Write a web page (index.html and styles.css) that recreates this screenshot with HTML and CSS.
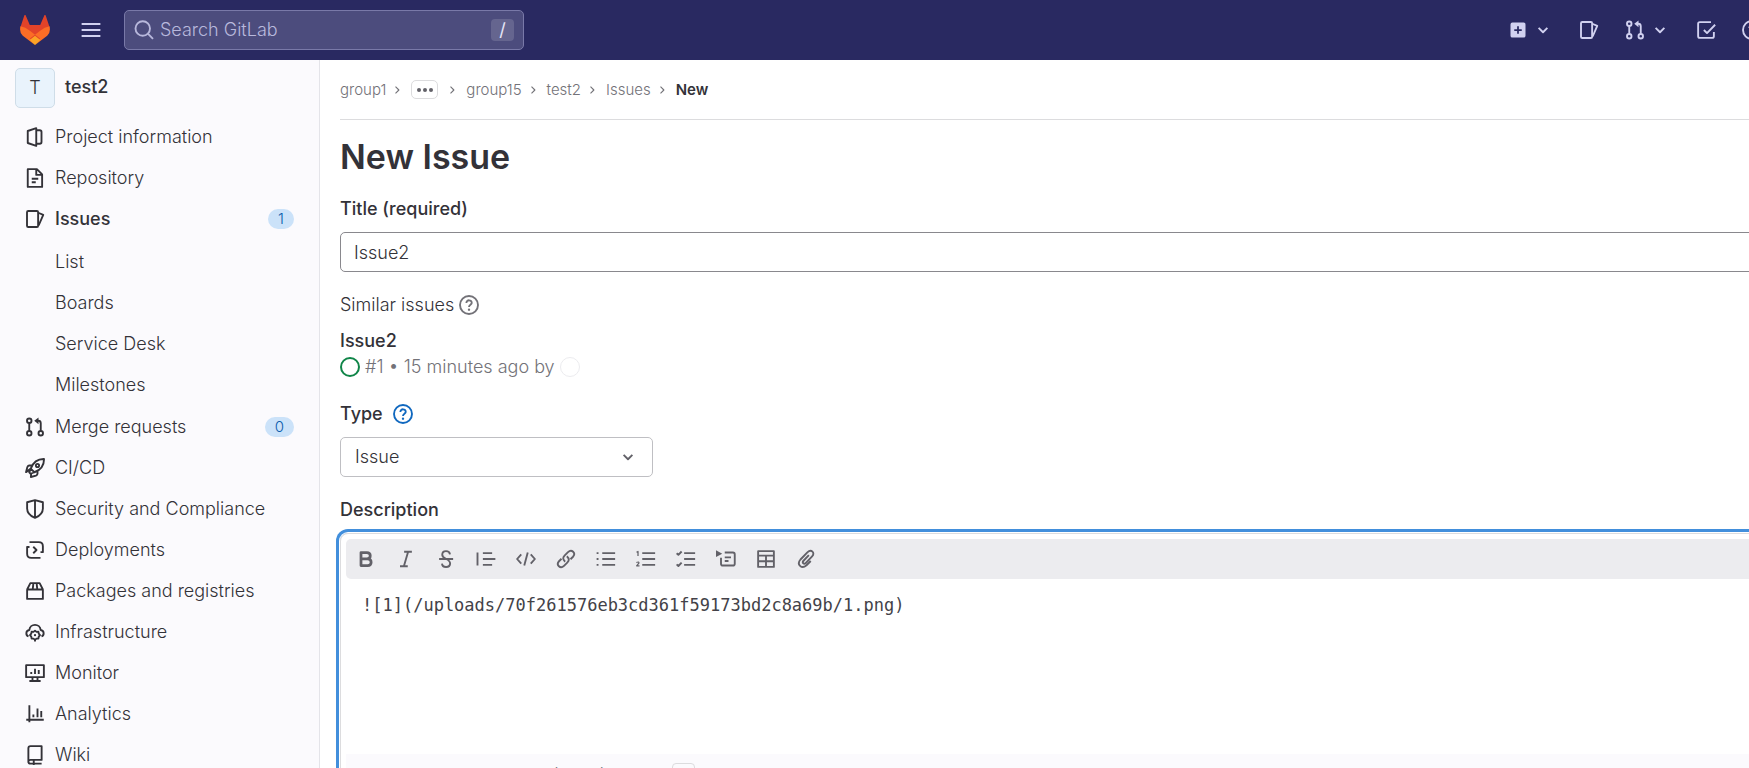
FILE: index.html
```
<!DOCTYPE html>
<html lang="en">
<head>
<meta charset="utf-8">
<title>New Issue · test2 · GitLab</title>
<link rel="stylesheet" href="styles.css">
</head>
<body>
<svg class="sprite" aria-hidden="true">
  <symbol id="project" viewBox="0 0 16 16"><path d="M2.2 3.2 9 .9v14.2l-6.800-2.300zM9.200 2.600h2.600q1.400 0 1.400 1.400v8q0 1.400-1.400 1.400H9.200"/></symbol>
  <symbol id="doc" viewBox="0 0 16 16"><path d="M2.200.9h7.300l4.200 4.200v10H2.200zM9 1.200v4.300h4.400M5.400 8.600h5.200M5.400 11.400h3.200"/></symbol>
  <symbol id="issues" viewBox="0 0 16 16"><rect x="1.6" y="1.6" width="8.9" height="12.8" rx="1"/><path d="m10.600 3 4 1.700-3.700 8.500"/></symbol>
  <symbol id="merge" viewBox="0 0 16 16"><circle cx="3.4" cy="3" r="1.8"/><circle cx="3.4" cy="13" r="1.8"/><circle cx="12.6" cy="13" r="1.8"/><path d="M3.400 5v6M12.600 11V5q0-2-2-2H9.500"/><path class="fill" d="M10.800.3v5.400L7.400 3z"/></symbol>
  <symbol id="rocket" viewBox="0 0 16 16"><path d="M15.200.8C10.600.7 6.700 3 4.600 8.500L7.500 11.400C13 9.300 15.300 5.400 15.200.8zM5.600 6H3.400Q2.400 6 1.900 7.200L.8 11.300l3.600-2.600M10 10.400v2.200q0 1-1.200 1.500L4.700 15.200l.3-3.500M4.600 8.500 3.400 11.500l1.100 1.100 3-1.200"/><circle cx="10" cy="6" r="1.300"/></symbol>
  <symbol id="shield" viewBox="0 0 16 16"><path d="M8 .9 14.300 2.600v4.900c0 3.500-2.500 6-6.300 7.600-3.800-1.600-6.300-4.100-6.300-7.600V2.600zM8 1v14"/></symbol>
  <symbol id="deploy" viewBox="0 0 16 16"><path d="M3.600 1.700H11q3.300 0 3.300 3.300v4.700M12.400 9.700h2.500M12.400 14.300H5Q1.700 14.300 1.700 11V5.600M1.100 5.600h2.500M6.600 5.400 9.200 8l-2.600 2.600"/></symbol>
  <symbol id="package" viewBox="0 0 16 16"><path d="M1.700 6.800h12.600v7.500H1.700zM1.700 6.800 4.300 1.700h7.400l2.600 5.100M6.700 1.700 6.200 6.500M9.300 1.700l.5 4.800"/></symbol>
  <symbol id="cloud" viewBox="0 0 16 16"><path d="M2.800 11.500C.4 10.600.4 6.800 3.500 6.400 3.800 .9 12.200.9 12.500 6.400c3.100.4 3.100 4.200.7 5.100"/><path d="m8 6.900 1.200 1 1.500-.1.300 1.500 1 1.200-1 1.200-.3 1.500-1.500.1-1.200 1-1.200-1-1.500-.1-.3-1.500-1-1.200 1-1.200.3-1.500 1.500.1z"/><circle class="fill" cx="8" cy="10.500" r=".9"/><path d="M8 14v1.500"/></symbol>
  <symbol id="monitor" viewBox="0 0 16 16"><path d="M.9 1.700h14.200v9.600H.9zM6 11.500v2.700M10 11.500v2.700M3.500 14.400h9M5 7.200v1.600M8 4.500v4.300M11 5.500v3.300"/></symbol>
  <symbol id="chart" viewBox="0 0 16 16"><path d="M3.500 1v13.500M1 12.600h14M6.700 8.300v2.200M10 3.600v6.900M13 5.600v4.900"/></symbol>
  <symbol id="book" viewBox="0 0 16 16"><path d="M2.700 14V2.600Q2.700.9 4.400.9h8.900v11H4.500q-1.800 0-1.800 1.500t1.800 1.500h8.800M7 12v4"/></symbol>
  <symbol id="chev" viewBox="0 0 16 16"><path d="m4.500 6.300 3.500 3.500 3.500-3.500"/></symbol>
  <symbol id="sep" viewBox="0 0 16 16"><path d="M6 3.500 10.500 8 6 12.500"/></symbol>
  <symbol id="help" viewBox="0 0 16 16"><circle cx="8" cy="8" r="7.200"/><path d="M5.900 6.400C5.900 3.400 10.300 3.700 10.200 6.300 10.100 7.800 8 7.700 8 9.500"/><circle class="fill" cx="8" cy="11.700" r=".95"/></symbol>
  <symbol id="todo" viewBox="0 0 16 16"><path d="M12 1.700H3Q1.700 1.700 1.700 3v10q0 1.300 1.300 1.300h10q1.300 0 1.300-1.300V9.500M6.300 8l2.500 2.500 6.500-6.700"/></symbol>
  <symbol id="bold" viewBox="0 0 16 16"><path class="heavy" d="M4 2.800h4.700q2.700 0 2.700 2.500T8.700 7.800H4zM4 7.800h5.300q2.800 0 2.800 2.700t-2.800 2.700H4z"/></symbol>
  <symbol id="italic" viewBox="0 0 16 16"><path d="M6.500 2.200h6.200M3.200 13.800h6.200M9.700 2.200 6.300 13.800"/></symbol>
  <symbol id="strike" viewBox="0 0 16 16"><path d="M2.500 8h11.200M11.200 4.300C10.700.8 5.100.9 5 4.400 4.900 6.700 6.500 7.200 8.100 8c2 .9 3.300 1.700 3.200 3.700-.2 3.600-6.300 3.500-6.500 0"/></symbol>
  <symbol id="quote" viewBox="0 0 16 16"><path d="M1.200 2.800v10.400M5.500 3.300h7.400M5.500 8h10M5.500 12.700h7.400"/></symbol>
  <symbol id="code" viewBox="0 0 16 16"><path d="M4.200 4.300.9 8l3.300 3.700M11.800 4.300 15.100 8l-3.300 3.700M9.400 2.800 6.600 13.200"/></symbol>
  <symbol id="link" viewBox="0 0 16 16"><path d="M7.300 10.200C5 8 5.600 6.500 7 5.100l2.600-2.600c3-2.900 6.600.9 4 3.700l-2 2M8.700 5.800c2.300 2.200 1.700 3.700.3 5.100l-2.600 2.600c-3 2.900-6.600-.9-4-3.700l2-2"/></symbol>
  <symbol id="ul" viewBox="0 0 16 16"><path d="M5 3.300h10.300M5 8h10.300M5 12.700h10.300M.5 3.300H2M.5 8H2M.5 12.700H2"/></symbol>
  <symbol id="ol" viewBox="0 0 16 16"><path d="M5 3.300h10.300M5 8h10.300M5 12.700h10.300"/><path class="thin" d="M.4 2.600 1.600 2v3.600M.3 10.800q2.300-1 2 .5L.5 13.500h2.300"/></symbol>
  <symbol id="check" viewBox="0 0 16 16"><path d="M6.500 3.300h8.800M6.500 8h8.800M6.500 12.700h8.800M.5 3.400l1.400 1.300L4.500 2M.5 12.300l1.400 1.300 2.600-2.700"/></symbol>
  <symbol id="details" viewBox="0 0 16 16"><path class="fill" d="M0 1l5 2.700L0 6.400z"/><path d="M7 2.800h6.500q1.500 0 1.500 1.500v7.400q0 1.500-1.500 1.500h-8q-1.500 0-1.500-1.500V7M7 6.700h5M7 9.600h3"/></symbol>
  <symbol id="table" viewBox="0 0 16 16"><path d="M1.700 1.700h12.600v12.600H1.700zM1.700 5.300h12.600M1.700 9.800h12.600M8 5.300v9"/></symbol>
  <symbol id="clip" viewBox="0 0 16 16"><path d="M11.800 9.600 8.400 13C4.500 16.500.2 12.300 3.600 8.400l5.500-5.700c3.100-3 6.500.3 3.800 3.200l-5 5.200c-1.600 1.600-3.300-.2-1.900-1.700l4.300-4.500"/></symbol>
  <symbol id="search" viewBox="0 0 16 16"><circle cx="7" cy="6.800" r="5.800"/><path d="m11.300 11.100 3.900 4"/></symbol>
  <symbol id="menu" viewBox="0 0 16 16"><path d="M.5 3.200h15M.5 8h15M.5 12.800h15"/></symbol>
  <symbol id="plus" viewBox="0 0 16 16"><path class="fill" fill-rule="evenodd" d="M3.500 2h9Q14 2 14 3.500v9q0 1.500-1.500 1.500h-9Q2 14 2 12.500v-9Q2 2 3.500 2zM7.300 5v2.300H5v1.400h2.300V11h1.400V8.700H11V7.300H8.700V5z"/></symbol>
</svg>
<div class="app">
  <header class="topbar">
    <a class="logo" href="#" aria-label="GitLab"><svg viewBox="0 0 30 30">
      <path fill="#e24329" d="M5.500 0 9.800 10h10.400L24.500 0q.8-.3 1.200.5L29.500 12l-2 7L15 28 2.500 19l-2-7L4.300.5Q4.700-.3 5.500 0z"/>
      <path fill="#fc6d26" d="M.5 11.300Q5.500 12 9.800 15.700L20 23.500 15.700 29.600h-1.400L2.800 20.800Q-1 17.300.5 11.300zM29.500 11.300q-5 .7-9.300 4.400L10 23.500l4.300 6.100h1.400l11.500-8.800q3.800-3.500 2.300-9.500z"/>
      <path fill="#fca326" d="m15 20.800 5.300 4.200-4.600 4.600q-.7.600-1.400 0L9.700 25z"/>
    </svg></a>
    <button class="bare" aria-label="Menu"><svg class="icon"><use href="#menu"/></svg></button>
    <label class="search"><svg class="icon"><use href="#search"/></svg><input type="search" placeholder="Search GitLab" aria-label="Search GitLab"><kbd>/</kbd></label>
    <nav class="tools" aria-label="Shortcuts">
      <button class="bare duo" aria-label="Create new"><svg class="icon"><use href="#plus"/></svg><svg class="icon"><use href="#chev"/></svg></button>
      <a class="bare" href="#" aria-label="Issues"><svg class="icon"><use href="#issues"/></svg></a>
      <button class="bare duo" aria-label="Merge requests"><svg class="icon"><use href="#merge"/></svg><svg class="icon"><use href="#chev"/></svg></button>
      <a class="bare" href="#" aria-label="To-Do List"><svg class="icon"><use href="#todo"/></svg></a>
      <button class="bare" aria-label="Help"><svg class="icon"><use href="#help"/></svg></button>
    </nav>
  </header>
  <div class="columns">
    <aside class="sidebar">
      <a class="context" href="#"><span class="avatar">T</span><span class="name">test2</span></a>
      <ul class="menu">
        <li><a href="#"><svg class="icon"><use href="#project"/></svg>Project information</a></li>
        <li><a href="#"><svg class="icon"><use href="#doc"/></svg>Repository</a></li>
        <li><a class="active" href="#"><svg class="icon"><use href="#issues"/></svg>Issues<span class="badge">1</span></a>
          <ul class="submenu">
            <li><a href="#">List</a></li>
            <li><a href="#">Boards</a></li>
            <li><a href="#">Service Desk</a></li>
            <li><a href="#">Milestones</a></li>
          </ul>
        </li>
        <li><a href="#"><svg class="icon"><use href="#merge"/></svg>Merge requests<span class="badge">0</span></a></li>
        <li><a href="#"><svg class="icon"><use href="#rocket"/></svg>CI/CD</a></li>
        <li><a href="#"><svg class="icon"><use href="#shield"/></svg>Security and Compliance</a></li>
        <li><a href="#"><svg class="icon"><use href="#deploy"/></svg>Deployments</a></li>
        <li><a href="#"><svg class="icon"><use href="#package"/></svg>Packages and registries</a></li>
        <li><a href="#"><svg class="icon"><use href="#cloud"/></svg>Infrastructure</a></li>
        <li><a href="#"><svg class="icon"><use href="#monitor"/></svg>Monitor</a></li>
        <li><a href="#"><svg class="icon"><use href="#chart"/></svg>Analytics</a></li>
        <li><a href="#"><svg class="icon"><use href="#book"/></svg>Wiki</a></li>
      </ul>
    </aside>
    <main class="content">
      <nav class="crumbs" aria-label="Breadcrumbs">
        <a href="#">group1</a><svg class="icon sep"><use href="#sep"/></svg>
        <button class="more" aria-label="Show more"><i></i><i></i><i></i></button><svg class="icon sep wide"><use href="#sep"/></svg>
        <a href="#">group15</a><svg class="icon sep"><use href="#sep"/></svg>
        <a href="#">test2</a><svg class="icon sep"><use href="#sep"/></svg>
        <a href="#">Issues</a><svg class="icon sep"><use href="#sep"/></svg>
        <a class="current" href="#">New</a>
      </nav>
      <h1>New Issue</h1>
      <form>
        <label class="label" for="title">Title (required)</label>
        <input class="field" id="title" type="text" value="Issue2">
        <section class="similar">
          <h2>Similar issues <svg class="icon"><use href="#help"/></svg></h2>
          <a class="issue" href="#">Issue2</a>
          <p class="meta"><span class="open"></span>#1 • 15 minutes ago by <span class="person"></span></p>
        </section>
        <div class="label"><label for="type">Type</label><a class="hint" href="#" aria-label="About types"><svg class="icon"><use href="#help"/></svg></a></div>
        <div class="pick"><select id="type"><option>Issue</option></select><svg class="icon"><use href="#chev"/></svg></div>
        <label class="label desc" for="description">Description</label>
        <div class="editor">
          <div class="toolbar">
            <button type="button" aria-label="Bold"><svg class="icon"><use href="#bold"/></svg></button>
            <button type="button" aria-label="Italic"><svg class="icon"><use href="#italic"/></svg></button>
            <button type="button" aria-label="Strikethrough"><svg class="icon"><use href="#strike"/></svg></button>
            <button type="button" aria-label="Quote"><svg class="icon"><use href="#quote"/></svg></button>
            <button type="button" aria-label="Code"><svg class="icon"><use href="#code"/></svg></button>
            <button type="button" aria-label="Link"><svg class="icon"><use href="#link"/></svg></button>
            <button type="button" aria-label="Bullet list"><svg class="icon"><use href="#ul"/></svg></button>
            <button type="button" aria-label="Numbered list"><svg class="icon"><use href="#ol"/></svg></button>
            <button type="button" aria-label="Checklist"><svg class="icon"><use href="#check"/></svg></button>
            <button type="button" aria-label="Collapsible section"><svg class="icon"><use href="#details"/></svg></button>
            <button type="button" aria-label="Table"><svg class="icon"><use href="#table"/></svg></button>
            <button type="button" aria-label="Attach a file"><svg class="icon"><use href="#clip"/></svg></button>
          </div>
          <textarea id="description" spellcheck="false">![1](/uploads/70f261576eb3cd361f59173bd2c8a69b/1.png)</textarea>
          <div class="foot">Supports Markdown. For quick actions, type <kbd>/</kbd>.</div>
        </div>
      </form>
    </main>
  </div>
</div>
</body>
</html>
```
FILE: styles.css
```
* { box-sizing: border-box; }
body {
  margin: 0;
  height: 100vh;
  overflow: hidden;
  background: #fff;
  color: #333238;
  font: 300 18px/24px Inter, "Noto Sans", sans-serif;
}
a { color: inherit; text-decoration: none; }
button, input, select, textarea { font: inherit; color: inherit; }
ul { list-style: none; margin: 0; padding: 0; }
.sprite { position: absolute; width: 0; height: 0; }
.icon {
  flex: none;
  width: 20px;
  height: 20px;
  fill: none;
  stroke: currentColor;
  stroke-width: 1.5;
  stroke-linejoin: round;
}
.fill { fill: currentColor; stroke: none; }
.heavy { stroke-width: 2.2; }
.thin { stroke-width: 1; }

/* The shell runs a little past the window's right edge. */
.app { width: calc(100% + 40px); }

.topbar {
  display: flex;
  align-items: center;
  height: 60px;
  padding: 0 27px 0 20px;
  background: #292961;
  color: #d1d1f0;
}
.logo { display: flex; width: 30px; height: 30px; margin-right: 31px; }
.logo svg { width: 30px; height: 30px; }
.bare { display: flex; align-items: center; padding: 0; border: 0; background: none; }
.search {
  display: flex;
  align-items: center;
  gap: 4px;
  width: 400px;
  height: 40px;
  margin-left: 23px;
  padding: 0 9px;
  border: 1px solid #7979a8;
  border-radius: 5px;
  background: #4c4c7d;
  color: #b8b8dc;
}
.search input {
  flex: 1;
  min-width: 0;
  border: 0;
  outline: 0;
  background: none;
}
.search input::placeholder { color: #b8b8dc; opacity: 1; }
.search kbd {
  width: 23px;
  border-radius: 4px;
  background: #65658f;
  color: #e6e6f7;
  font: 18px/22px Inter, sans-serif;
  text-align: center;
}
.tools { display: flex; gap: 26px; margin-left: auto; }
.duo { gap: 5px; }

.columns { display: flex; }
.sidebar {
  flex: none;
  width: 320px;
  border-right: 1px solid #e4e4e9;
  background: #fbfafd;
}
.context { display: flex; gap: 10px; padding: 8px 15px; }
.avatar {
  width: 40px;
  border: 1px solid #cfdde8;
  border-radius: 5px;
  background: #e9f3fc;
  line-height: 38px;
  text-align: center;
}
.name { font-weight: 500; line-height: 38px; }
.menu a {
  display: flex;
  align-items: center;
  gap: 10px;
  height: 41px;
  padding: 0 25px;
}
.menu .submenu { padding: 2px 0 1px; }
.menu .submenu a { padding-left: 55px; }
.menu .active { font-weight: 500; }
.badge {
  margin-left: auto;
  padding: 0 10px;
  border-radius: 10px;
  background: #cbe2f9;
  color: #0b5cad;
  font-size: 15px;
  font-weight: 300;
  line-height: 20px;
}

.content { flex: 1; min-width: 0; padding: 0 20px; }
.crumbs {
  display: flex;
  align-items: center;
  height: 60px;
  border-bottom: 1px solid #dcdcde;
  color: #737278;
  font-size: 15px;
}
.icon.sep { width: 12px; height: 12px; margin: 0 8px 0 5px; }
.icon.sep.wide { margin: 0 8px; }
.more {
  display: flex;
  align-items: center;
  justify-content: center;
  gap: 2px;
  width: 27px;
  height: 19px;
  padding: 0;
  border: 1px solid #dcdcde;
  border-radius: 5px;
  background: #fff;
}
.more i { width: 4px; height: 4px; border-radius: 50%; background: #626168; }
.current { color: #333238; font-weight: 600; }

h1 { margin: 15px 0 18px; font-size: 34px; font-weight: 600; line-height: 44px; }
.label { display: flex; align-items: center; gap: 10px; font-weight: 500; line-height: 24px; margin: 8px 0 11px; }
.hint { display: flex; color: #1068bf; }
.field {
  display: block;
  width: 100%;
  height: 40px;
  padding: 0 13px;
  border: 1px solid #89888d;
  border-radius: 5px;
  background: #fff;
}
.similar { padding: 21px 0 15px; }
.similar h2 { display: flex; align-items: center; gap: 5px; margin: 0 0 12px; font-size: 18px; font-weight: 300; }
.similar h2 .icon { color: #737278; }
.issue { display: block; font-weight: 500; }
.meta { display: flex; align-items: center; gap: 5px; margin: 2px 0 0; color: #737278; }
.open { width: 20px; height: 20px; border: 2px solid #108548; border-radius: 50%; }
.person { width: 20px; height: 20px; border: 1px solid #ececef; border-radius: 50%; }
.pick { display: grid; align-items: center; width: 313px; }
.pick > * { grid-area: 1 / 1; }
.pick .icon { justify-self: end; margin-right: 15px; color: #626168; pointer-events: none; }
select {
  appearance: none;
  height: 40px;
  padding: 0 14px;
  border: 1px solid #bfbfc3;
  border-radius: 5px;
  background: #fff;
}
.desc { margin-top: 21px; }
.editor {
  padding: 5px;
  border: 1px solid #dcdcde;
  border-radius: 8px;
  box-shadow: 0 0 0 1px #fff, 0 0 0 4px #428fdc;
}
.toolbar {
  display: flex;
  border-radius: 5px;
  background: #ececef;
  color: #626168;
}
.toolbar button {
  display: flex;
  align-items: center;
  justify-content: center;
  width: 40px;
  height: 40px;
  padding: 0;
  border: 0;
  background: none;
}
textarea {
  display: block;
  width: 100%;
  height: 175px;
  padding: 14px 16px;
  border: 0;
  outline: 0;
  resize: none;
  background: none;
  color: #434248;
  font: 17px/24px "DejaVu Sans Mono", monospace;
}
.foot { padding: 8px 15px; background: #fbfafd; color: #737278; font-size: 15px; }
.foot kbd {
  display: inline-block;
  width: 23px;
  border: 1px solid #dcdcde;
  border-radius: 4px;
  color: #333238;
  font: 14px/20px "DejaVu Sans Mono", monospace;
  text-align: center;
}
```
